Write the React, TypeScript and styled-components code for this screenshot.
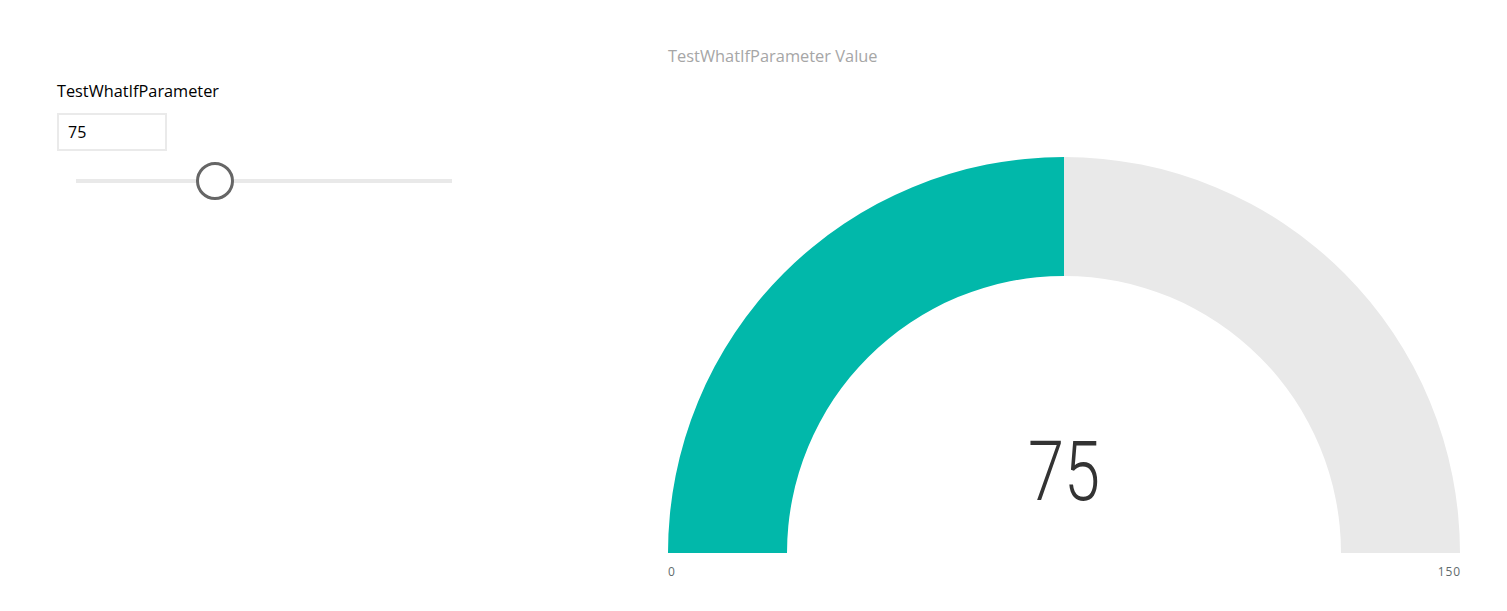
import React from "react";
import styled, { createGlobalStyle } from "styled-components";

const GlobalStyle = createGlobalStyle`
    html, body {
        margin: 0;
        padding: 0;
        background: #ffffff;
    }
    body {
        font-family: "Open Sans", "Liberation Sans", sans-serif;
    }
`;

const Page = styled.div`
    display: flex;
    width: 1507px;
    height: 611px;
`;

const SlicerPanel = styled.div`
    box-sizing: border-box;
    width: 668px;
    padding: 80px 0 0 57px;
    display: flex;
    flex-direction: column;
`;

const SlicerLabel = styled.div`
    font-size: 16.3px;
    line-height: 22px;
    color: #000000;
`;

const ValueBox = styled.div`
    margin-top: 11px;
    width: 97px;
    height: 34px;
    border: 2px solid #eaeaea;
    font-size: 16px;
    line-height: 34px;
    padding-left: 9px;
    color: #000000;
`;

const SliderTrack = styled.div`
    position: relative;
    margin: 28px 0 0 19px;
    width: 376px;
    height: 4px;
    background: #e9e9e9;
`;

const SliderThumb = styled.div`
    position: absolute;
    top: 50%;
    width: 32px;
    height: 32px;
    border: 3px solid #666666;
    border-radius: 50%;
    background: #ffffff;
    transform: translate(-50%, -50%);
`;

const GaugePanel = styled.div`
    width: 792px;
    padding-top: 45px;
    display: flex;
    flex-direction: column;
`;

const GaugeTitle = styled.div`
    font-size: 16.4px;
    line-height: 22px;
    color: #a6a6a6;
`;

const GaugeSvg = styled.svg`
    display: block;
    margin-top: 90px;
`;

const AxisRow = styled.div`
    display: flex;
    justify-content: space-between;
    margin-top: 12px;
    font-size: 12px;
    line-height: 14px;
    letter-spacing: 0.8px;
    color: #5f6b6d;
`;

const min = 0;
const max = 150;
const value = 75;

function Gauge() {
    const R = 396;
    const r = 277;
    const cx = 396;
    const cy = 396;
    const t = (value - min) / (max - min);
    const a = Math.PI * (1 - t);
    const ox = cx + R * Math.cos(a);
    const oy = cy - R * Math.sin(a);
    const ix = cx + r * Math.cos(a);
    const iy = cy - r * Math.sin(a);

    const filled = `M ${cx - R} ${cy} A ${R} ${R} 0 0 1 ${ox} ${oy} L ${ix} ${iy} A ${r} ${r} 0 0 0 ${cx - r} ${cy} Z`;
    const rest = `M ${ox} ${oy} A ${R} ${R} 0 0 1 ${cx + R} ${cy} L ${cx + r} ${cy} A ${r} ${r} 0 0 0 ${ix} ${iy} Z`;

    return (
        <GaugeSvg width={792} height={396} viewBox="0 0 792 396">
            <path d={rest} fill="#e9e9e9" />
            <path d={filled} fill="#01b8aa" />
            <text
                x={cx}
                y={343}
                textAnchor="middle"
                fontFamily="Roboto, sans-serif"
                fontWeight={300}
                fontSize={83}
                fill="#333333"
                textLength={72}
                lengthAdjust="spacingAndGlyphs"
            >
                {value}
            </text>
        </GaugeSvg>
    );
}

export default function App() {
    return (
        <>
            <GlobalStyle />
            <Page>
                <SlicerPanel>
                    <SlicerLabel>TestWhatIfParameter</SlicerLabel>
                    <ValueBox>{value}</ValueBox>
                    <SliderTrack>
                        <SliderThumb style={{ left: `${(139 / 376) * 100}%` }} />
                    </SliderTrack>
                </SlicerPanel>
                <GaugePanel>
                    <GaugeTitle>TestWhatIfParameter Value</GaugeTitle>
                    <Gauge />
                    <AxisRow>
                        <span>{min}</span>
                        <span style={{ marginRight: "-0.8px" }}>{max}</span>
                    </AxisRow>
                </GaugePanel>
            </Page>
        </>
    );
}
